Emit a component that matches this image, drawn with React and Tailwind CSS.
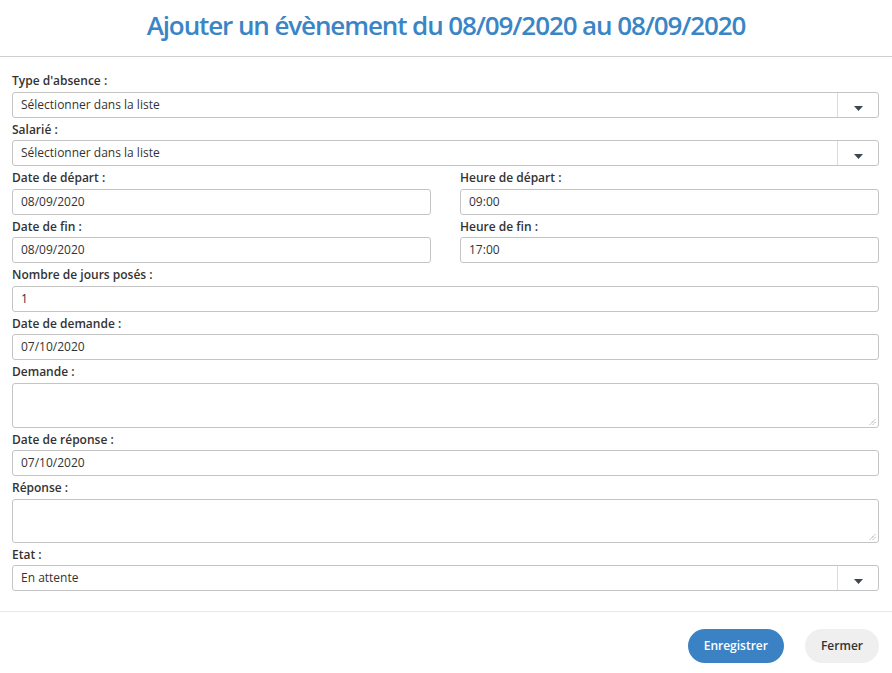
import React from 'react'

const font = { fontFamily: '"Open Sans", "Liberation Sans", sans-serif' }

const Label = ({ children }) => (
  <div className="pt-[4px] mb-[3px] h-[19.5px] text-[12px] leading-[16px] font-semibold text-[#333]">
    {children}
  </div>
)

const Input = ({ value }) => (
  <div className="h-[26px] border border-[#c4c4c4] rounded-[3px] px-[8px] flex items-center text-[12px] text-[#333]">
    {value}
  </div>
)

const Select = ({ value }) => (
  <div className="h-[26px] border border-[#c4c4c4] rounded-[3px] flex text-[12px] text-[#333]">
    <div className="flex-1 flex items-center px-[8px]">{value}</div>
    <div className="w-[41px] border-l border-[#dcdcdc] flex items-end justify-center pb-[6px]">
      <svg width="9" height="5" viewBox="0 0 9 5"><path d="M0 0h9L4.5 5z" fill="#3d4653" /></svg>
    </div>
  </div>
)

const TextArea = ({ h }) => (
  <div className={`relative border border-[#c4c4c4] rounded-[3px] ${h}`}>
    <svg className="absolute right-[2px] bottom-[2px]" width="7" height="7" viewBox="0 0 7 7">
      <path d="M1 6.5L6.5 1M4 6.5L6.5 4" stroke="#777" strokeWidth="1" strokeDasharray="1 1" />
    </svg>
  </div>
)

const Field = ({ label, children }) => (
  <div>
    <Label>{label}</Label>
    {children}
  </div>
)

export default function App() {
  return (
    <div className="w-[892px] h-[673px] bg-white" style={font}>
      <div className="h-[57px] border-b border-[#cfcfcf] flex items-center justify-center">
        <h1 className="text-[26px] font-semibold text-[#3a85c6] tracking-[-1.1px] -mt-[6px]">
          Ajouter un évènement du 08/09/2020 au 08/09/2020
        </h1>
      </div>
      <div className="px-[12px] pt-[12px] pb-[20px] mr-[1px]">
        <Field label="Type d'absence :"><Select value="Sélectionner dans la liste" /></Field>
        <Field label="Salarié :"><Select value="Sélectionner dans la liste" /></Field>
        <div className="grid grid-cols-2 gap-x-[29px]">
          <Field label="Date de départ :"><Input value="08/09/2020" /></Field>
          <Field label="Heure de départ :"><Input value="09:00" /></Field>
          <Field label="Date de fin :"><Input value="08/09/2020" /></Field>
          <Field label="Heure de fin :"><Input value="17:00" /></Field>
        </div>
        <Field label="Nombre de jours posés :"><Input value="1" /></Field>
        <Field label="Date de demande :"><Input value="07/10/2020" /></Field>
        <Field label="Demande :"><TextArea h="h-[45px]" /></Field>
        <Field label="Date de réponse :"><Input value="07/10/2020" /></Field>
        <Field label="Réponse :"><TextArea h="h-[44px]" /></Field>
        <Field label="Etat :"><Select value="En attente" /></Field>
      </div>
      <div className="border-t border-[#e8e8e8] flex justify-end gap-[21px] pt-[17px] px-[13px]">
        <button className="h-[34px] px-[16px] rounded-full bg-[#3a82c4] text-white text-[12px] font-semibold">
          Enregistrer
        </button>
        <button className="h-[34px] px-[16px] rounded-full bg-[#efefef] text-[#333] text-[12px] font-semibold">
          Fermer
        </button>
      </div>
    </div>
  )
}
